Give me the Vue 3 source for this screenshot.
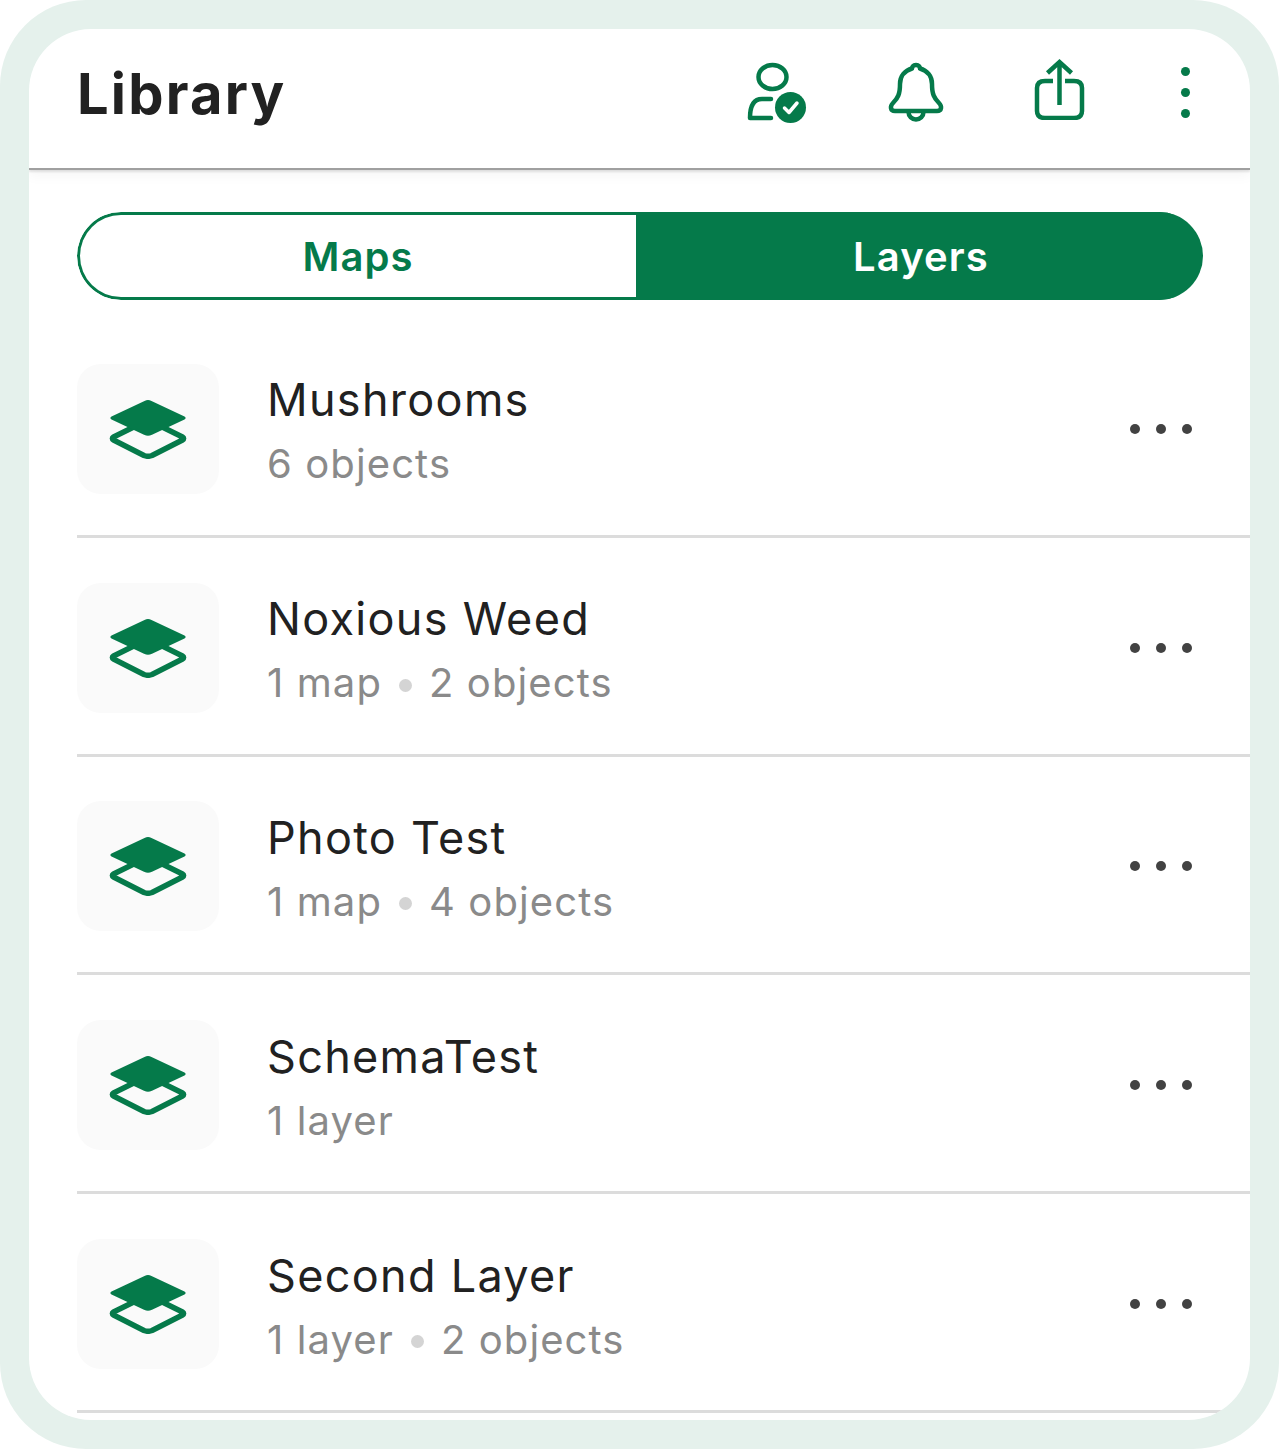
<template>
  <div class="frame">
    <div class="screen">
      <header class="top-bar">
        <h1 class="title">Library</h1>
        <div class="actions">
          <svg class="icon-user" width="62" height="64" viewBox="0 0 62 64" fill="none">
            <ellipse cx="27.500" cy="17" rx="14" ry="12" stroke="#057a4a" stroke-width="4.500" />
            <path d="M26 39H17C9 39 5 46 5 58H26" stroke="#057a4a" stroke-width="4.500" stroke-linecap="round" stroke-linejoin="round" />
            <circle cx="45.500" cy="47.500" r="15.500" fill="#057a4a" />
            <path d="M39.500 48L44 52.500L52 43" stroke="#fff" stroke-width="3.500" stroke-linecap="round" stroke-linejoin="round" />
          </svg>
          <svg class="icon-bell" width="56" height="60" viewBox="0 0 56 60" fill="none">
            <path d="M28 3C31 3 32 5 32 6.500C39 8.500 44 14 44 22C44 32 46 36 51 41C54 44 54 49 49 49H7C2 49 2 44 5 41C10 36 12 32 12 22C12 14 17 8.500 24 6.500C24 5 25 3 28 3Z" stroke="#057a4a" stroke-width="4.500" stroke-linejoin="round" />
            <path d="M20.500 50C20.500 54.500 24 57.500 28 57.500C32 57.500 35.500 54.500 35.500 50" stroke="#057a4a" stroke-width="4.500" />
          </svg>
          <svg class="icon-share" width="52" height="62" viewBox="0 0 52 62" fill="none">
            <path d="M20 23H12C6.500 23 4 25.500 4 30V53C4 57.500 6.500 60 12 60H41C46.500 60 49 57.500 49 53V30C49 25.500 46.500 23 41 23H32" stroke="#057a4a" stroke-width="4.500" />
            <path d="M26.500 47V4M14.500 15L26.500 4L38.500 15" stroke="#057a4a" stroke-width="4.500" />
          </svg>
          <div class="kebab"><span></span><span></span><span></span></div>
        </div>
      </header>

      <div class="tabs">
        <button class="tab">Maps</button>
        <button class="tab active">Layers</button>
      </div>

      <ul class="list">
        <li v-for="item in items" :key="item.name" class="row">
          <div class="thumb">
            <svg width="78" height="60" viewBox="0 0 78 60" fill="none">
              <path d="M4.500 38L39 21L73.500 38C75 38.800 75 40.200 73.500 41L43 56.500C40.500 57.500 37.500 57.500 35 56.500L4.500 41C3 40.200 3 38.800 4.500 38Z" stroke="#057a4a" stroke-width="5.500" stroke-linejoin="round" />
              <path d="M35.500 2C38 0.800 40 0.800 42.500 2L75.500 17.500C77 18.300 77 19.700 75.500 20.500L43 35.800C40 37 38 37 35 35.800L2.500 20.500C1 19.700 1 18.300 2.500 17.500Z" fill="#057a4a" />
            </svg>
          </div>
          <div class="text">
            <div class="name">{{ item.name }}</div>
            <div class="sub">
              <template v-for="(part, i) in item.parts" :key="part">
                <i v-if="i > 0" class="dot"></i>
                <span>{{ part }}</span>
              </template>
            </div>
          </div>
          <div class="more"><span></span><span></span><span></span></div>
        </li>
      </ul>
    </div>
  </div>
</template>

<script setup>
const items = [
  { name: 'Mushrooms', parts: ['6 objects'] },
  { name: 'Noxious Weed', parts: ['1 map', '2 objects'] },
  { name: 'Photo Test', parts: ['1 map', '4 objects'] },
  { name: 'SchemaTest', parts: ['1 layer'] },
  { name: 'Second Layer', parts: ['1 layer', '2 objects'] },
]
</script>

<style>
html,
body {
  margin: 0;
  background: #fff;
}
</style>

<style scoped>
* {
  box-sizing: border-box;
}

.frame {
  width: 1279px;
  height: 1449px;
  padding: 29px;
  background: #e5f1ec;
  border-radius: 86px;
  font-family: Inter, "Noto Sans", sans-serif;
}

.screen {
  height: 1391px;
  width: 1221px;
  background: #fff;
  border-radius: 62px;
  overflow: hidden;
}

.top-bar {
  height: 141px;
  display: flex;
  align-items: center;
  justify-content: space-between;
  padding: 0 60px 0 48px;
  border-bottom: 2px solid #a0a0a0;
  box-shadow: 0 2px 2px rgba(0, 0, 0, 0.1), 0 6px 12px rgba(0, 0, 0, 0.04);
}

.title {
  margin: 0 0 10px;
  font-size: 56px;
  font-weight: 700;
  letter-spacing: 2.2px;
  color: #212121;
}

.actions {
  display: flex;
  align-items: center;
  margin-bottom: 14px;
}

.icon-user {
  margin: 0 81px 0 0;
}

.icon-bell {
  margin: 0 89px 0 0;
}

.icon-share {
  margin: 0 96px 6px 0;
}

.kebab {
  display: flex;
  flex-direction: column;
  gap: 12px;
  margin-top: 2px;
}

.kebab span {
  width: 9px;
  height: 9px;
  border-radius: 50%;
  background: #057a4a;
}

.tabs {
  display: flex;
  width: 1126px;
  height: 88px;
  margin: 42px 0 0 48px;
  border-radius: 44px;
  overflow: hidden;
}

.tab {
  width: 559px;
  padding: 0;
  border: 3px solid #057a4a;
  border-right: none;
  border-radius: 44px 0 0 44px;
  background: #fff;
  color: #057a4a;
  font: 600 40px Inter, sans-serif;
  letter-spacing: 1.1px;
}

.tab.active {
  width: 567px;
  border-radius: 0;
  background: #057a4a;
  color: #fff;
}

.list {
  list-style: none;
  margin: 19px 0 0 48px;
  padding: 0;
}

.row {
  display: flex;
  align-items: center;
  height: 218.8px;
  padding-top: 4px;
  border-bottom: 3px solid #dcdcdc;
}

.thumb {
  width: 142px;
  height: 130px;
  display: flex;
  align-items: center;
  justify-content: center;
  background: #fafafa;
  border-radius: 24px;
}

.text {
  flex: 1;
  margin: 4px 0 0 48px;
}

.name {
  font-size: 45px;
  letter-spacing: 1.3px;
  line-height: 54px;
  color: #212121;
}

.sub {
  display: flex;
  align-items: center;
  margin-top: 13px;
  font-size: 40px;
  letter-spacing: 1.1px;
  line-height: 48px;
  color: #8a8a8a;
}

.dot {
  width: 13px;
  height: 13px;
  margin: 4px 17px 0;
  border-radius: 50%;
  background: #d4d4d4;
}

.more {
  display: flex;
  gap: 16px;
  margin-right: 58px;
}

.more span {
  width: 10px;
  height: 10px;
  border-radius: 50%;
  background: #424242;
}
</style>
